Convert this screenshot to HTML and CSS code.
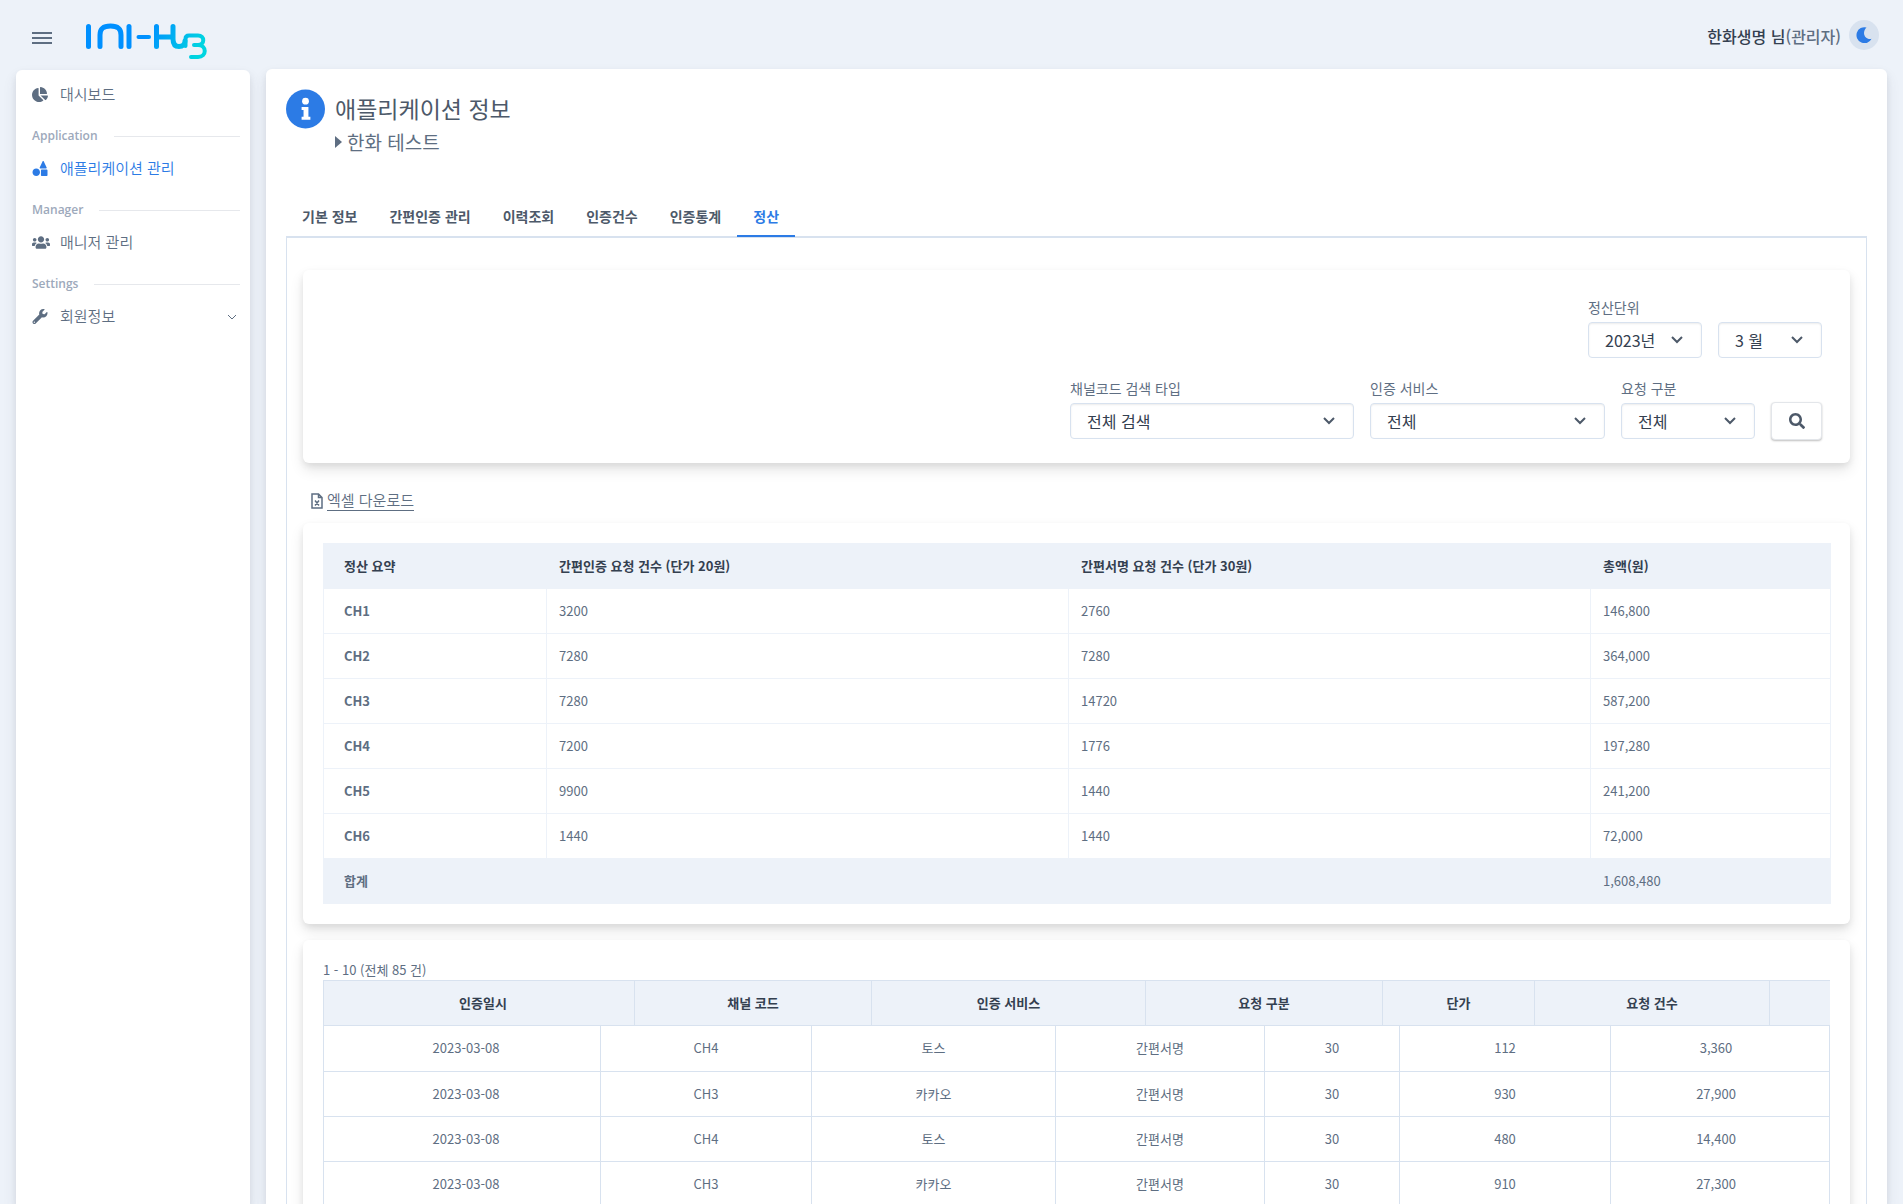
FILE: index.html
```html
<!DOCTYPE html>
<html lang="ko">
<head>
    <meta charset="UTF-8">
    <meta name="viewport" content="width=device-width, initial-scale=1.0">
    <title>INI-Hub</title>
    <link rel="stylesheet" href="styles.css">
</head>
<body>
    <header class="topbar">
        <button class="menu-toggle" type="button" aria-label="메뉴"><span></span><span></span><span></span></button>
        <a class="logo" href="#" aria-label="INI-Hub">
            <svg width="122" height="38" viewBox="0 0 122 38" fill="none" stroke="url(#logoColor)" stroke-width="5" stroke-linecap="round" stroke-linejoin="round">
                <defs>
                    <linearGradient id="logoColor" gradientUnits="userSpaceOnUse" x1="64" y1="4" x2="112" y2="30">
                        <stop offset="0" stop-color="#0090ff"/>
                        <stop offset="1" stop-color="#00d5e0"/>
                    </linearGradient>
                </defs>
                <path d="M2.500 3.500V23.500"/>
                <path d="M14 23.500V12C14 6 17 3 24.500 3S35 6 35 12V23.500"/>
                <path d="M43 3.500V23.500"/>
                <path d="M52.500 14H63" stroke-width="4"/>
                <path d="M70.500 3.500V23.500M70.500 14H87M87 3.500V16C87 21 89 23.500 93 23.500S99 21 99 18"/>
                <path d="M99.500 23V16C99.500 13 101 12.500 103 12.500H112C119 12.500 119 22 112 22H108M112 22C121 22 121 34 112 34H105" stroke-width="4"/>
            </svg>
        </a>
        <div class="user">
            <span class="user-name"><strong>한화생명 님</strong>(관리자)</span>
            <button class="theme-toggle" type="button" aria-label="다크 모드">
                <svg width="16" height="16" viewBox="0 0 16 16" fill="currentColor"><path d="M10.500.4A8 8 0 1 0 15.600 11.800C9.500 13.200 5 6 10.500.4z"/></svg>
            </button>
        </div>
    </header>

    <div class="layout">
        <nav class="sidebar">
            <a class="nav-link" href="#">
                <svg viewBox="0 0 544 512" fill="currentColor"><path d="M527.790 288H290.500l158.030 158.030c6.040 6.040 15.980 6.530 22.190.68 38.700-36.460 65.320-85.560 73.130-140.860 1.340-9.460-6.510-17.850-16.060-17.850zm-15.830-64.800C503.720 103.740 408.260 8.280 288.800.04 279.680-.59 272 7.100 272 16.240V240h223.770c9.140 0 16.820-7.680 16.190-16.800zM224 288V50.710c0-9.550-8.390-17.400-17.840-16.060C86.990 51.490-4.100 155.600.140 280.370 4.500 408.510 114.830 513.590 243.030 511.980c50.400-.63 96.970-16.870 135.260-44.030 7.900-5.600 8.420-17.230 1.570-24.080L224 288z"/></svg>
                대시보드
            </a>
            <div class="nav-title"><span>Application</span></div>
            <a class="nav-link active" href="#">
                <svg viewBox="0 0 512 512" fill="currentColor"><path d="M128 256C57.300 256 0 313.300 0 384s57.300 128 128 128 128-57.300 128-128-57.300-128-128-128zM484 288H312c-14 0-24 10-24 24v172c0 14 10 28 24 28h172c14 0 28-14 28-28V312c0-14-14-24-28-24zM482 220L386 17c-10-20-34-20-44 0l-96 203c-10 18 0 32 20 32h196c20 0 30-14 20-32z"/></svg>
                애플리케이션 관리
            </a>
            <div class="nav-title"><span>Manager</span></div>
            <a class="nav-link" href="#">
                <svg viewBox="0 0 640 512" fill="currentColor"><path d="M96 224c35.300 0 64-28.700 64-64s-28.700-64-64-64-64 28.700-64 64 28.700 64 64 64zm448 0c35.300 0 64-28.700 64-64s-28.700-64-64-64-64 28.700-64 64 28.700 64 64 64zm32 32h-64c-17.600 0-33.500 7.100-45.100 18.600 40.300 22.100 68.900 62 75.100 109.400h66c17.700 0 32-14.300 32-32v-32c0-35.300-28.700-64-64-64zm-256 0c61.900 0 112-50.100 112-112S381.900 32 320 32 208 82.100 208 144s50.100 112 112 112zm76.800 32h-8.300c-20.800 10-43.900 16-68.500 16s-47.600-6-68.500-16h-8.300C179.600 288 128 339.600 128 403.200V432c0 26.500 21.500 48 48 48h288c26.500 0 48-21.500 48-48v-28.800c0-63.600-51.600-115.200-115.200-115.200zm-223.700-13.400C161.500 263.100 145.600 256 128 256H64c-35.300 0-64 28.700-64 64v32c0 17.700 14.300 32 32 32h65.900c6.300-47.400 34.900-87.300 75.200-109.400z"/></svg>
                매니저 관리
            </a>
            <div class="nav-title"><span>Settings</span></div>
            <a class="nav-link" href="#">
                <svg viewBox="0 0 512 512" fill="currentColor"><path d="M507.730 109.100c-2.240-9.030-13.540-12.090-20.120-5.510l-74.360 74.360-67.880-11.310-11.310-67.880 74.360-74.360c6.620-6.620 3.430-17.900-5.660-20.160-47.380-11.740-99.550.91-136.580 37.930-39.640 39.640-50.550 97.100-34.050 147.200L18.740 402.760c-24.990 24.990-24.990 65.510 0 90.500 24.990 24.990 65.510 24.990 90.500 0l213.210-213.210c50.120 16.710 107.470 5.680 147.370-34.220 37.070-37.070 49.700-89.320 37.910-136.730zM64 472c-13.250 0-24-10.750-24-24 0-13.260 10.750-24 24-24s24 10.740 24 24c0 13.250-10.750 24-24 24z"/></svg>
                회원정보
                <svg class="nav-arrow" viewBox="0 0 10 10" fill="none" stroke="currentColor"><path d="M1 3l4 4 4-4"/></svg>
            </a>
        </nav>

        <main class="content">
            <div class="page-head">
                <svg class="info-icon" viewBox="0 0 40 40"><circle cx="20" cy="20" r="20" fill="#2c7be5"/><g fill="#fff"><circle cx="20" cy="12" r="3.500"/><path d="M16 18h7v10h2v3h-9v-3h2v-7h-2z"/></g></svg>
                <div>
                    <h1>애플리케이션 정보</h1>
                    <h2><svg viewBox="0 0 7 12" fill="currentColor"><path d="M0 0l7 6-7 6z"/></svg>한화 테스트</h2>
                </div>
            </div>

            <div class="tabs" role="tablist">
                <button type="button" role="tab">기본 정보</button>
                <button type="button" role="tab">간편인증 관리</button>
                <button type="button" role="tab">이력조회</button>
                <button type="button" role="tab">인증건수</button>
                <button type="button" role="tab">인증통계</button>
                <button class="active" type="button" role="tab" aria-selected="true">정산</button>
            </div>

            <div class="tab-content">
                <form class="card filter">
                    <div class="filter-row">
                        <div class="field year">
                            <label for="year">정산단위</label>
                            <select id="year"><option>2023년</option></select>
                        </div>
                        <div class="field month">
                            <select id="month" aria-label="월"><option>3 월</option></select>
                        </div>
                    </div>
                    <div class="filter-row">
                        <div class="field channel">
                            <label for="channel">채널코드 검색 타입</label>
                            <select id="channel"><option>전체 검색</option></select>
                        </div>
                        <div class="field service">
                            <label for="service">인증 서비스</label>
                            <select id="service"><option>전체</option></select>
                        </div>
                        <div class="field kind">
                            <label for="kind">요청 구분</label>
                            <select id="kind"><option>전체</option></select>
                        </div>
                        <button class="search" type="button" aria-label="검색">
                            <svg width="16" height="16" viewBox="0 0 512 512" fill="currentColor"><path d="M505 442.700L405.300 343c-4.500-4.500-10.600-7-17-7H372c27.600-35.300 44-79.700 44-128C416 93.100 322.900 0 208 0S0 93.100 0 208s93.100 208 208 208c48.300 0 92.700-16.400 128-44v16.300c0 6.400 2.500 12.500 7 17l99.700 99.700c9.400 9.400 24.600 9.400 33.900 0l28.300-28.300c9.400-9.400 9.400-24.600.1-34zM208 336c-70.700 0-128-57.200-128-128 0-70.700 57.200-128 128-128 70.700 0 128 57.200 128 128 0 70.700-57.200 128-128 128z"/></svg>
                        </button>
                    </div>
                </form>

                <a class="excel" href="#">
                    <svg width="12" height="16" viewBox="0 0 12 16" fill="none" stroke="currentColor" stroke-width="1.500"><path d="M1 1h6.500L11 4.500V15H1zM7.500 1v3.500H11M4 7.500l4 5M8 7.500l-4 5"/></svg>
                    <span>엑셀 다운로드</span>
                </a>

                <div class="card summary">
                    <table>
                        <colgroup><col class="w223"><col class="w522"><col class="w522"><col class="w240"></colgroup>
                        <thead>
                            <tr><th>정산 요약</th><th>간편인증 요청 건수 (단가 20원)</th><th>간편서명 요청 건수 (단가 30원)</th><th>총액(원)</th></tr>
                        </thead>
                        <tbody>
                            <tr><th>CH1</th><td>3200</td><td>2760</td><td>146,800</td></tr>
                            <tr><th>CH2</th><td>7280</td><td>7280</td><td>364,000</td></tr>
                            <tr><th>CH3</th><td>7280</td><td>14720</td><td>587,200</td></tr>
                            <tr><th>CH4</th><td>7200</td><td>1776</td><td>197,280</td></tr>
                            <tr><th>CH5</th><td>9900</td><td>1440</td><td>241,200</td></tr>
                            <tr><th>CH6</th><td>1440</td><td>1440</td><td>72,000</td></tr>
                        </tbody>
                        <tfoot>
                            <tr><th>합계</th><td></td><td></td><td>1,608,480</td></tr>
                        </tfoot>
                    </table>
                </div>

                <div class="card detail">
                    <p>1 - 10 (전체 85 건)</p>
                    <div class="detail-head">
                        <table>
                            <colgroup><col class="w311"><col class="w237"><col class="w274"><col class="w237"><col class="w152"><col class="w235"><col class="w246"></colgroup>
                            <thead>
                                <tr><th>인증일시</th><th>채널 코드</th><th>인증 서비스</th><th>요청 구분</th><th>단가</th><th>요청 건수</th><th></th></tr>
                            </thead>
                        </table>
                    </div>
                    <table>
                        <colgroup><col class="w277"><col class="w211"><col class="w244"><col class="w209"><col class="w135"><col class="w211"><col class="w219"></colgroup>
                        <tbody>
                            <tr><td>2023-03-08</td><td>CH4</td><td>토스</td><td>간편서명</td><td>30</td><td>112</td><td>3,360</td></tr>
                            <tr><td>2023-03-08</td><td>CH3</td><td>카카오</td><td>간편서명</td><td>30</td><td>930</td><td>27,900</td></tr>
                            <tr><td>2023-03-08</td><td>CH4</td><td>토스</td><td>간편서명</td><td>30</td><td>480</td><td>14,400</td></tr>
                            <tr><td>2023-03-08</td><td>CH3</td><td>카카오</td><td>간편서명</td><td>30</td><td>910</td><td>27,300</td></tr>
                        </tbody>
                    </table>
                </div>
            </div>
        </main>
    </div>
</body>
</html>
```
FILE: styles.css
```css
* {
    box-sizing: border-box;
}
body {
    margin: 0;
    height: 100vh;
    overflow: hidden;
    display: flex;
    flex-direction: column;
    font-family: "Noto Sans CJK KR", sans-serif;
    font-size: 14px;
    line-height: 20px;
    background-color: #edf2f9;
    color: #5e6e82;
}
h1, h2, p {
    margin: 0;
    font-weight: 400;
}
a {
    color: inherit;
    text-decoration: none;
}
button, select {
    font-family: inherit;
    color: inherit;
    cursor: pointer;
}

/* top bar */
.topbar {
    display: flex;
    align-items: center;
    flex: none;
    height: 69px;
    padding: 0 24px 0 32px;
}
.menu-toggle {
    display: flex;
    flex-direction: column;
    gap: 3px;
    width: 20px;
    margin: 6px 34px 0 0;
    padding: 0;
    border: none;
    background: none;
}
.menu-toggle span {
    height: 2px;
    background: #5e6e82;
}
.logo {
    height: 38px;
    margin-top: 14px;
}
.user {
    display: flex;
    align-items: center;
    gap: 8px;
    margin-left: auto;
}
.user-name {
    padding-top: 2px;
    font-size: 16px;
    font-weight: 500;
}
.user-name strong {
    font-weight: 500;
    color: #344050;
}
.theme-toggle {
    display: flex;
    align-items: center;
    justify-content: center;
    width: 30px;
    height: 30px;
    padding: 0;
    border: none;
    border-radius: 50%;
    background: #d8e2ef;
    color: #2c7be5;
}

.layout {
    display: flex;
    flex: 1;
    gap: 16px;
    min-height: 0;
    padding: 0 16px;
}

/* sidebar */
.sidebar {
    flex: none;
    width: 234px;
    margin-top: 1px;
    padding: 9px 10px 0 16px;
    border-radius: 6px 6px 0 0;
    background: #fff;
    box-shadow: 0 7px 14px rgba(65, 69, 88, 0.1), 0 3px 6px rgba(0, 0, 0, 0.07);
}
.nav-link {
    display: flex;
    align-items: center;
    height: 30px;
    font-size: 15px;
    font-weight: 350;
}
.nav-link svg {
    flex: none;
    width: 18px;
    height: 15px;
    margin-right: 10px;
}
.nav-link svg:first-child:not([viewBox="0 0 640 512"]) {
    width: 16px;
    margin-right: 12px;
}
.nav-link.active {
    color: #2c7be5;
}
.nav-link .nav-arrow {
    width: 10px;
    height: 10px;
    margin: 2px 3px 0 auto;
}
.nav-title {
    display: flex;
    align-items: center;
    gap: 16px;
    height: 20px;
    margin: 17px 0 7px;
    font-family: "Open Sans", sans-serif;
    font-size: 12px;
    font-weight: 600;
    color: #9da9bb;
}
.nav-title::after {
    content: "";
    flex: 1;
    height: 1px;
    background: #e6e8ec;
}

/* page */
.content {
    flex: 1;
    min-width: 0;
    padding: 20px 20px 0;
    border-radius: 6px 6px 0 0;
    background: #fff;
    box-shadow: 0 7px 14px rgba(65, 69, 88, 0.1), 0 3px 6px rgba(0, 0, 0, 0.07);
}
.page-head {
    display: flex;
    gap: 10px;
}
.info-icon {
    width: 39px;
    height: 40px;
}
.page-head h1 {
    font-size: 23px;
    line-height: 38px;
    color: #4d5969;
}
.page-head h2 {
    display: flex;
    align-items: center;
    gap: 5px;
    font-size: 19px;
    line-height: 30px;
}
.page-head h2 svg {
    width: 7px;
    height: 12px;
}
.tabs {
    display: flex;
    margin-top: 40px;
    border-bottom: 2px solid #d8e2ef;
}
.tabs button {
    height: 40px;
    margin-bottom: -1px;
    padding: 0 16px;
    border: none;
    border-bottom: 2px solid transparent;
    background: none;
    font-size: 14px;
    font-weight: 600;
    color: #4d5969;
}
.tabs button.active {
    border-bottom-color: #2c7be5;
    color: #2c7be5;
}
.tab-content {
    padding: 32px 16px;
    border: 1px solid #d8e2ef;
    border-top: none;
}
.card {
    padding: 20px;
    border-radius: 6px;
    background: #fff;
    box-shadow: 0 7px 14px rgba(0, 0, 0, 0.1), 0 3px 6px rgba(0, 0, 0, 0.07);
}

/* search filter */
.filter {
    display: flex;
    flex-direction: column;
    gap: 19px;
    padding: 27px 28px 23px;
}
.filter-row {
    display: flex;
    align-items: flex-end;
    justify-content: flex-end;
    gap: 16px;
}
.field {
    display: flex;
    flex-direction: column;
    gap: 5px;
    margin-bottom: 1px;
}
.field select {
    width: 100%;
    height: 36px;
    padding: 0 16px;
    appearance: none;
    border: 1px solid #d8e2ef;
    border-radius: 4px;
    background: #fff;
    box-shadow: inset 0 1px 2px rgba(0, 0, 0, 0.08);
    font-size: 16px;
    color: #344050;
    background-image: url("data:image/svg+xml,%3Csvg xmlns='http://www.w3.org/2000/svg' viewBox='0 0 12 12' fill='none' stroke='%234d5969' stroke-width='2'%3E%3Cpath d='M1 3l5 5 5-5'/%3E%3C/svg%3E");
    background-repeat: no-repeat;
    background-position: right 18px center;
    background-size: 12px 12px;
}
.year {
    width: 114px;
}
.month {
    width: 104px;
}
.channel {
    width: 284px;
}
.service {
    width: 235px;
}
.kind {
    width: 134px;
}
.search {
    display: flex;
    align-items: center;
    justify-content: center;
    width: 51px;
    height: 38px;
    border: 1px solid #e3e6ea;
    border-radius: 4px;
    background: #fff;
    box-shadow: 0 1px 2px rgba(0, 0, 0, 0.25);
    color: #4d5969;
}

.excel {
    display: inline-flex;
    align-items: center;
    gap: 4px;
    margin: 27px 0 12px 8px;
}
.excel span {
    border-bottom: 1px solid #5e6e82;
    font-size: 15px;
    font-weight: 350;
}

/* tables */
table {
    width: 100%;
    table-layout: fixed;
    border-collapse: collapse;
    font-size: 13px;
}
th, td {
    height: 45px;
    padding: 0 12px;
    text-align: left;
}
th:first-child, td:first-child {
    padding-left: 20px;
}
thead th {
    background: #edf2f9;
    color: #344050;
}
.summary th, .summary td {
    border: 1px solid #edf2f9;
}
.summary tfoot tr {
    background: #edf2f9;
}
.detail {
    margin-top: 16px;
}
.detail p {
    font-size: 13px;
}
.detail th, .detail td {
    border: 1px solid #d8e2ef;
    text-align: center;
}
.detail td:last-child {
    padding-right: 20px;
}
.detail tbody tr:first-child td {
    border-top: none;
}
/* header is wider than the rows and gets clipped */
.detail-head {
    overflow: hidden;
}
.detail-head table {
    width: 112%;
}
.w135 { width: 135px; }
.w152 { width: 152px; }
.w209 { width: 209px; }
.w211 { width: 211px; }
.w219 { width: 219px; }
.w223 { width: 223px; }
.w235 { width: 235px; }
.w237 { width: 237px; }
.w240 { width: 240px; }
.w244 { width: 244px; }
.w246 { width: 246px; }
.w274 { width: 274px; }
.w277 { width: 277px; }
.w311 { width: 311px; }
.w522 { width: 522px; }
```
